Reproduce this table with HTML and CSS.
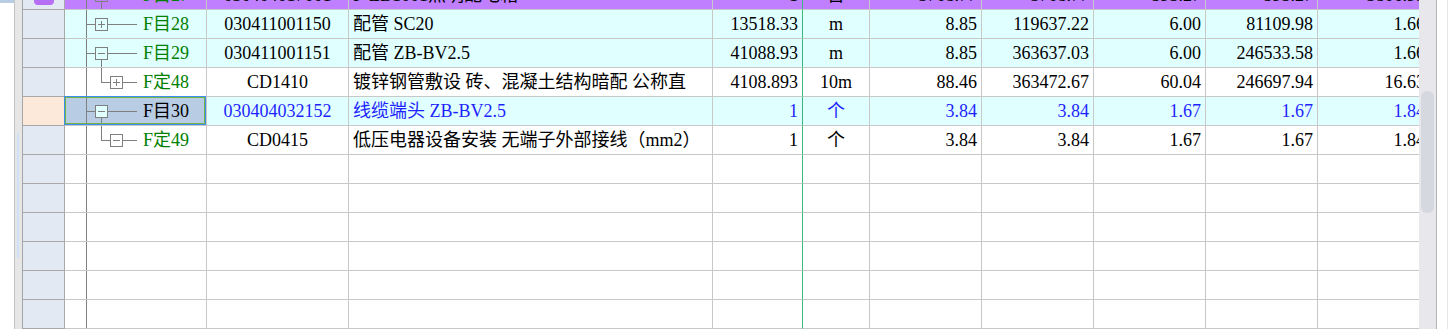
FILE: index.html
```html
<!DOCTYPE html>
<html lang="zh">
<head>
<meta charset="utf-8">
<title>清单</title>
<link rel="stylesheet" href="styles.css">
</head>
<body>
<div class="frame">
  <div class="gutter"></div>
  <div class="strip"></div>
  <div class="table">
    <div class="rows">
      <div class="row pu">
        <div class="c hdr"><span class="chk"></span></div>
        <div class="c tree"><svg class="tw" width="78" height="28" viewBox="0 0 78 28"><path d="M21 14.5H30M43 14.5H72M36.5 21V28"/><rect x="30.5" y="8.5" width="12" height="12"/><path d="M33 14.5H40"/></svg><span class="lbl g">F目27</span></div>
        <div class="c ctr">030404017001</div>
        <div class="c txt">F-ZB1001照明配电箱</div>
        <div class="c num">1</div>
        <div class="c ctr">台</div>
        <div class="c num">3708.77</div>
        <div class="c num">3708.77</div>
        <div class="c num">595.27</div>
        <div class="c num">595.27</div>
        <div class="c num">3806.93</div>
      </div>
      <div class="row cy">
        <div class="c hdr"></div>
        <div class="c tree"><svg class="tw" width="78" height="28" viewBox="0 0 78 28"><path d="M21 14.5H30M43 14.5H72"/><rect x="30.5" y="8.5" width="12" height="12"/><path d="M33 14.5H40M36.5 11V18"/></svg><span class="lbl g">F目28</span></div>
        <div class="c ctr">030411001150</div>
        <div class="c txt">配管 SC20</div>
        <div class="c num">13518.33</div>
        <div class="c ctr">m</div>
        <div class="c num">8.85</div>
        <div class="c num">119637.22</div>
        <div class="c num">6.00</div>
        <div class="c num">81109.98</div>
        <div class="c num">1.66</div>
      </div>
      <div class="row cy">
        <div class="c hdr"></div>
        <div class="c tree"><svg class="tw" width="78" height="28" viewBox="0 0 78 28"><path d="M21 14.5H30M43 14.5H72M36.5 21V28"/><rect x="30.5" y="8.5" width="12" height="12"/><path d="M33 14.5H40"/></svg><span class="lbl g">F目29</span></div>
        <div class="c ctr">030411001151</div>
        <div class="c txt">配管 ZB-BV2.5</div>
        <div class="c num">41088.93</div>
        <div class="c ctr">m</div>
        <div class="c num">8.85</div>
        <div class="c num">363637.03</div>
        <div class="c num">6.00</div>
        <div class="c num">246533.58</div>
        <div class="c num">1.66</div>
      </div>
      <div class="row wh">
        <div class="c hdr"></div>
        <div class="c tree"><svg class="tw" width="78" height="28" viewBox="0 0 78 28"><path d="M36.5 0V14M36 14.5H45M58 14.5H72"/><rect x="45.5" y="8.5" width="12" height="12"/><path d="M48 14.5H55M51.5 11V18"/></svg><span class="lbl g">F定48</span></div>
        <div class="c ctr">CD1410</div>
        <div class="c txt">镀锌钢管敷设 砖、混凝土结构暗配 公称直</div>
        <div class="c num">4108.893</div>
        <div class="c ctr">10m</div>
        <div class="c num">88.46</div>
        <div class="c num">363472.67</div>
        <div class="c num">60.04</div>
        <div class="c num">246697.94</div>
        <div class="c num">16.63</div>
      </div>
      <div class="row cy bl">
        <div class="c hdr cur"></div>
        <div class="c tree sel"><svg class="tw" width="78" height="28" viewBox="0 0 78 28"><path d="M21 14.5H30M43 14.5H72M36.5 21V28"/><rect x="30.5" y="8.5" width="12" height="12"/><path d="M33 14.5H40"/></svg><span class="lbl">F目30</span></div>
        <div class="c ctr">030404032152</div>
        <div class="c txt">线缆端头 ZB-BV2.5</div>
        <div class="c num">1</div>
        <div class="c ctr">个</div>
        <div class="c num">3.84</div>
        <div class="c num">3.84</div>
        <div class="c num">1.67</div>
        <div class="c num">1.67</div>
        <div class="c num">1.84</div>
      </div>
      <div class="row wh">
        <div class="c hdr"></div>
        <div class="c tree"><svg class="tw" width="78" height="28" viewBox="0 0 78 28"><path d="M36.5 0V14M36 14.5H45M58 14.5H72"/><rect x="45.5" y="8.5" width="12" height="12"/><path d="M48 14.5H55"/></svg><span class="lbl g">F定49</span></div>
        <div class="c ctr">CD0415</div>
        <div class="c txt">低压电器设备安装 无端子外部接线（mm2）</div>
        <div class="c num">1</div>
        <div class="c ctr">个</div>
        <div class="c num">3.84</div>
        <div class="c num">3.84</div>
        <div class="c num">1.67</div>
        <div class="c num">1.67</div>
        <div class="c num">1.84</div>
      </div>
      <div class="row wh"><div class="c hdr"></div><div class="c tree"></div><div class="c"></div><div class="c"></div><div class="c"></div><div class="c"></div><div class="c"></div><div class="c"></div><div class="c"></div><div class="c"></div><div class="c"></div></div>
      <div class="row wh"><div class="c hdr"></div><div class="c tree"></div><div class="c"></div><div class="c"></div><div class="c"></div><div class="c"></div><div class="c"></div><div class="c"></div><div class="c"></div><div class="c"></div><div class="c"></div></div>
      <div class="row wh"><div class="c hdr"></div><div class="c tree"></div><div class="c"></div><div class="c"></div><div class="c"></div><div class="c"></div><div class="c"></div><div class="c"></div><div class="c"></div><div class="c"></div><div class="c"></div></div>
      <div class="row wh"><div class="c hdr"></div><div class="c tree"></div><div class="c"></div><div class="c"></div><div class="c"></div><div class="c"></div><div class="c"></div><div class="c"></div><div class="c"></div><div class="c"></div><div class="c"></div></div>
      <div class="row wh"><div class="c hdr"></div><div class="c tree"></div><div class="c"></div><div class="c"></div><div class="c"></div><div class="c"></div><div class="c"></div><div class="c"></div><div class="c"></div><div class="c"></div><div class="c"></div></div>
      <div class="row wh"><div class="c hdr"></div><div class="c tree"></div><div class="c"></div><div class="c"></div><div class="c"></div><div class="c"></div><div class="c"></div><div class="c"></div><div class="c"></div><div class="c"></div><div class="c"></div></div>
    </div>
  </div>
  <div class="vscroll"><div class="thumb"></div></div>
  <div class="rest"></div>
</div>
</body>
</html>
```
FILE: styles.css
```css
* { box-sizing: border-box; }
html, body { margin: 0; padding: 0; background: #fff; overflow: hidden; }
body {
  font-family: "Liberation Serif", "Noto Sans CJK SC", serif;
  font-size: 18px;
  color: #000;
}
.frame { display: flex; width: 1451px; height: 329px; overflow: hidden; }
.gutter {
  flex: none; width: 14px;
  background: linear-gradient(#b8cce4, #b8cce4) 0 0 / 14px 3px no-repeat, #fff;
}
.strip {
  flex: none; width: 8px;
  border-left: 1px solid #c4c4c4;
  background: linear-gradient(#cfe1f7, #cfe1f7) 2px 133px / 2px 125px no-repeat, #e6e6e6;
}
.table {
  flex: none; width: 1397px;
  border-left: 1px solid #a6a6a6;
  overflow: hidden;
}
.rows { margin-top: -19px; }
.row {
  display: grid;
  grid-template-columns: 42px 142px 142px 364px 90px 67px repeat(5, 112px);
  height: 29px;
  --bg: #fff;
}
.row.cy { --bg: #e0ffff; }
.row.pu { --bg: #bf7fff; }
.row.bl { color: #1f1fff; }
.c {
  height: 29px;
  line-height: 28px;
  border-right: 1px solid #c8c8c8;
  border-bottom: 1px solid #c8c8c8;
  background-color: var(--bg);
  white-space: nowrap;
  overflow: hidden;
}
.c:nth-child(5) { border-right-color: #3ab87e; }
.hdr {
  background-color: #e3e9f2;
  border-color: #a9a9a9;
  display: flex; align-items: center; justify-content: center;
}
.hdr.cur { background-color: #fde9d9; }
.chk { width: 20px; height: 20px; border-radius: 4px; background: #b66ef4; }
.tree {
  display: flex; align-items: center;
  background-image: linear-gradient(#7f7f7f, #7f7f7f);
  background-position: 21px 0;
  background-size: 1px 100%;
  background-repeat: no-repeat;
}
.tree.sel {
  position: relative;
  overflow: visible;
  background-color: #b8cce4;
}
.tree.sel::after {
  content: "";
  position: absolute;
  top: -1px; left: -1px; right: 0; bottom: 0;
  border: 1px solid #3d8ef0;
  box-shadow: inset 0 0 0 1px #72b545;
  pointer-events: none;
}
.tw { display: block; flex: none; fill: none; stroke: #7f7f7f; stroke-width: 1; }
.tw rect { fill: var(--bg); }
.lbl { color: #000; }
.lbl.g { color: #008000; }
.ctr { text-align: center; }
.txt { padding-left: 4px; }
.num { text-align: right; padding-right: 4px; }
.vscroll {
  flex: none; width: 18px;
  background: #e8e8ec;
  border-right: 1px solid #b4b4b4;
  padding: 91px 0 0 2px;
}
.thumb { width: 13px; height: 122px; border-radius: 6px; background: #d5d8de; }
.rest {
  flex: none; width: 14px;
  background: linear-gradient(#e6e6e6, #e6e6e6) 10px 0 / 1px 100% no-repeat, #fff;
}
```
